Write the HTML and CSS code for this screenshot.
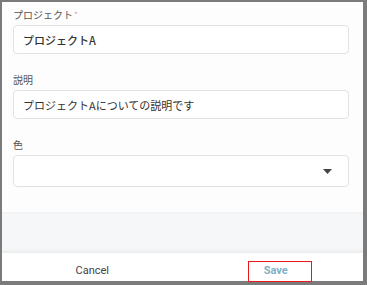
FILE: index.html
```html
<!DOCTYPE html>
<html lang="ja">
<head>
<meta charset="utf-8">
<link rel="stylesheet" href="styles.css">
</head>
<body>
<div class="panel">
  <div class="form">
    <div class="field">
      <label class="label">プロジェクト<span class="req">*</span></label>
      <div class="input"><span class="value strong">プロジェクトA</span></div>
    </div>
    <div class="field">
      <label class="label">説明</label>
      <div class="input"><span class="value">プロジェクトAについての説明です</span></div>
    </div>
    <div class="field">
      <label class="label">色</label>
      <div class="input select">
        <svg class="caret" width="9" height="5" viewBox="0 0 9 5"><path d="M0 0H9L4.5 5Z" fill="#444"/></svg>
      </div>
    </div>
  </div>
  <div class="band"></div>
  <div class="footer">
    <button class="btn cancel">Cancel</button>
    <button class="btn save"><span class="save-text">Save</span><span class="mark"></span></button>
  </div>
</div>
</body>
</html>
```
FILE: styles.css
```css
html, body {
  margin: 0;
  padding: 0;
}
body {
  background: #7b7b7b;
  width: 367px;
  height: 285px;
  overflow: hidden;
  font-family: "Noto Sans CJK JP", "Noto Sans", sans-serif;
}
.panel {
  margin: 2px 4px 0 2px;
  height: 279px;
  background: #fdfdfd;
  display: flex;
  flex-direction: column;
}
.form {
  padding: 6px 14px 0 11px;
  height: 210px;
  box-sizing: border-box;
}
.field {
  display: flex;
  flex-direction: column;
}
.field + .field {
  margin-top: 19px;
}
.label {
  font-size: 10px;
  line-height: 14px;
  color: #555;
  margin-bottom: 3px;
}
.req {
  color: #d99;
  font-size: 8px;
  vertical-align: top;
  margin-left: 1px;
}
.input {
  height: 29px;
  border: 1px solid #e2e2e2;
  border-radius: 4px;
  background: #fff;
  box-sizing: border-box;
  display: flex;
  align-items: center;
  padding: 0 9px;
}
.value {
  font-size: 11px;
  color: #333;
}
.strong {
  font-weight: 500;
  color: #333;
}
.select {
  height: 32px;
  justify-content: flex-end;
  padding-right: 16px;
}
.band {
  height: 41px;
  background: linear-gradient(#eff0f1 0, #f6f7f9 2px, #f6f7f9 36px, #ebecec 41px);
}
.footer {
  flex: 1;
  display: flex;
  background: #fff;
}
.btn {
  flex: 1;
  border: 0;
  background: none;
  font-family: Roboto, "Liberation Sans", sans-serif;
  font-size: 11px;
  padding: 6px 0 0 0;
  position: relative;
}
.cancel {
  color: #444;
}
.save {
  color: #7fb0c6;
  font-weight: 700;
}
.save-text {
  margin-left: 6px;
}
.mark {
  position: absolute;
  left: 65px;
  top: 8px;
  width: 64px;
  height: 21px;
  border: 1px solid #e8181c;
  box-sizing: border-box;
}
```
